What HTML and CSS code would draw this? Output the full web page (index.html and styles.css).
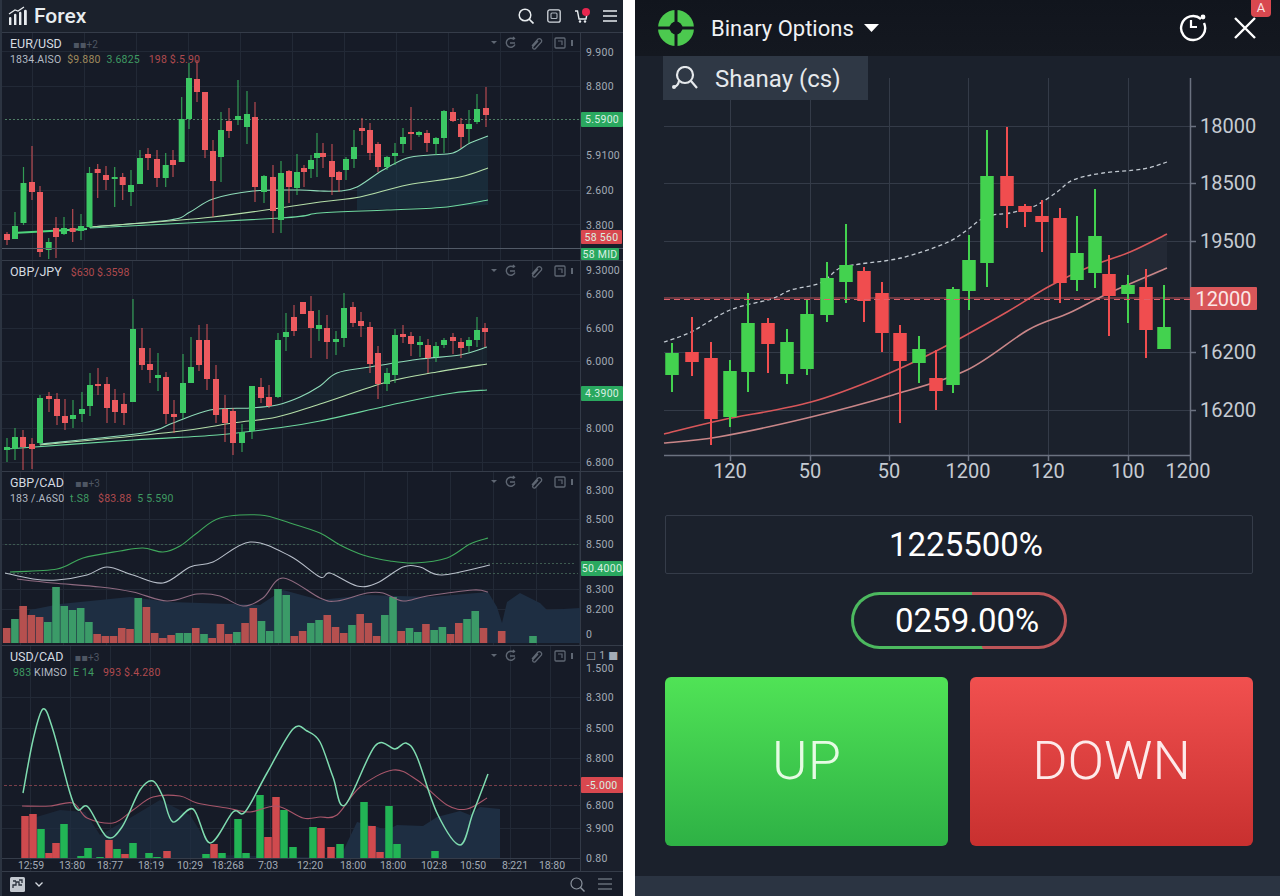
FILE: index.html
```html
<!DOCTYPE html>
<html lang="en">
<head>
    <meta charset="UTF-8">
    <meta name="viewport" content="width=device-width, initial-scale=1.0">
    <title>Forex / Binary Options</title>
    <link rel="stylesheet" href="styles.css">
</head>
<body>

<svg class="defs" width="0" height="0" aria-hidden="true">
    <symbol id="pane-tools" viewBox="0 0 84 14">
        <path d="M1 5h6l-3 3z" fill="currentColor"/>
        <path d="M24 3.5a4.5 4.5 0 1 0 1 5M20 7h5M23 1l2 2" fill="none" stroke="currentColor" stroke-width="1.4"/>
        <path d="M42 10l6-7a2.4 2.4 0 0 1 3.5 3l-6 6.5a1.6 1.6 0 0 1-2.5-2l5-5.5" fill="none" stroke="currentColor" stroke-width="1.3"/>
        <rect x="65" y="2" width="10" height="10" rx="1" fill="none" stroke="currentColor" stroke-width="1.3"/>
        <path d="M68 5h4v4" fill="none" stroke="currentColor" stroke-width="1.2"/>
        <path d="M82 4v6" stroke="currentColor" stroke-width="2"/>
    </symbol>
</svg>

<div class="screens">

    <!-- Forex -->
    <section class="forex">
        <header class="forex-top">
            <div class="brand">
                <svg class="brand-icon" viewBox="0 0 20 20" width="20" height="20">
                    <path d="M1 19v-7q0-1 1.2-1t1.2 1v7zM6 19v-10q0-1.2 1.2-1.2t1.2 1.2v10zM11 19v-12q0-1.2 1.2-1.2t1.2 1.2v12zM16 19v-14q0-1.2 1.4-1.2t1.4 1.2v14z" fill="#e8ecef"/>
                    <path d="M1 8l6-4 3 1 6-4" fill="none" stroke="#e8ecef" stroke-width="1.3"/>
                </svg>
                <span>Forex</span>
            </div>
            <div class="top-icons">
                <svg viewBox="0 0 16 16" width="16" height="16"><circle cx="7" cy="7" r="5.8" fill="none" stroke="#e8ecef" stroke-width="1.5"/><path d="M11 11l4.500 4.500" stroke="#e8ecef" stroke-width="1.7"/></svg>
                <svg viewBox="0 0 14 14" width="14" height="14"><rect x=".8" y=".8" width="12.400" height="12.400" rx="2" fill="none" stroke="#d5dae0" stroke-width="1.300"/><rect x="4" y="4" width="6" height="5.500" rx="1" fill="none" stroke="#aab2bc" stroke-width="1.100"/></svg>
                <svg viewBox="0 0 16 16" width="16" height="16"><path d="M1 3h2.500l1.500 8h7l1-5" fill="none" stroke="#e8ecef" stroke-width="1.400"/><circle cx="6" cy="13.500" r="1.200" fill="#e8ecef"/><circle cx="11" cy="13.500" r="1.200" fill="#e8ecef"/><circle cx="12" cy="4" r="4" fill="#e8264f"/></svg>
                <svg viewBox="0 0 14 14" width="14" height="14"><path d="M0 2h14M0 7h14M0 12h14" stroke="#e8ecef" stroke-width="1.500"/></svg>
            </div>
        </header>

        <div class="pane pane-a" data-chart="eur">
            <div class="pane-head">
                <div class="pane-title">EUR/USD <span class="chip">▪▪+2</span></div>
                <div class="pane-quote">1834.AISO <span class="amber">$9.880</span> <span class="gain">3.6825</span> <span class="loss">198 $.5.90</span></div>
            </div>
            <svg class="pane-tools"><use href="#pane-tools"/></svg>
        </div>
        <div class="pane pane-b" data-chart="gbpjpy">
            <div class="pane-head">
                <div class="pane-title">OBP/JPY <span class="loss loss-inline">$630 $.3598</span></div>
            </div>
            <svg class="pane-tools"><use href="#pane-tools"/></svg>
        </div>
        <div class="pane pane-c" data-chart="gbpcad">
            <div class="pane-head">
                <div class="pane-title">GBP/CAD <span class="chip">▪▪+3</span></div>
                <div class="pane-quote">183 /.A6S0 <span class="gain">t.S8</span> <span class="loss">$83.88</span> <span class="gain">5 5.590</span></div>
            </div>
            <svg class="pane-tools"><use href="#pane-tools"/></svg>
        </div>
        <div class="pane pane-d" data-chart="usdcad">
            <div class="pane-head">
                <div class="pane-title">USD/CAD <span class="chip">▪▪+3</span></div>
                <div class="pane-quote"><span class="gain">983</span> KIMSO <span class="gain">E 14</span> <span class="loss">993 $.4.280</span></div>
            </div>
            <svg class="pane-tools"><use href="#pane-tools"/></svg>
        </div>

        <footer class="forex-foot">
            <div class="foot-group">
                <svg viewBox="0 0 15 15" width="15" height="15"><rect width="15" height="15" rx="1.500" fill="#c3c8cf"/><path d="M3 11V8h3V5h3v3h3M9 3h3v3M3 4h3" fill="none" stroke="#2a303c" stroke-width="1.300"/></svg>
                <svg viewBox="0 0 8 5" width="8" height="5"><path d="M.5.5L4 4 7.500.5" fill="none" stroke="#d5dae0" stroke-width="1.300"/></svg>
            </div>
            <div class="foot-group foot-right">
                <svg viewBox="0 0 15 15" width="15" height="15"><circle cx="6.500" cy="6.500" r="5.500" fill="none" stroke="#8b939e" stroke-width="1.200"/><path d="M10.500 10.500l4 4" stroke="#8b939e" stroke-width="1.400"/></svg>
                <svg viewBox="0 0 14 12" width="14" height="12"><path d="M0 1h14M0 6h14M0 11h14" stroke="#8b939e" stroke-width="1.200"/></svg>
            </div>
        </footer>
    </section>

    <!-- Binary Options -->
    <section class="binary">
        <header class="binary-top">
            <svg class="logo" viewBox="0 0 36 36" width="36" height="36">
                <circle cx="18" cy="18" r="18" fill="#4cc94f"/>
                <path d="M18 0v36M0 18h36" stroke="#12161e" stroke-width="3"/>
                <circle cx="18" cy="18" r="6.500" fill="#12161e"/>
            </svg>
            <span class="binary-title">Binary Options</span>
            <svg class="caret" viewBox="0 0 15 8" width="15" height="8"><path d="M0 0h15l-7.500 8z" fill="#fff"/></svg>
            <div class="binary-actions">
                <svg viewBox="0 2 30 30" width="30" height="30">
                    <path d="M23 8a12 12 0 1 0 3 4" fill="none" stroke="#fff" stroke-width="2.400"/>
                    <circle cx="25" cy="6" r="2.400" fill="#fff"/>
                    <path d="M13 9v7h6" fill="none" stroke="#fff" stroke-width="2.200"/>
                </svg>
                <div class="close">
                    <svg viewBox="0 0 22 22" width="22" height="22"><path d="M1 1l20 20M21 1L1 21" stroke="#fff" stroke-width="2.400"/></svg>
                    <span class="close-badge">A</span>
                </div>
            </div>
        </header>

        <div class="binary-chart">
            <div class="pair-search">
                <svg viewBox="0 0 26 24" width="26" height="24">
                    <circle cx="13" cy="9" r="8" fill="none" stroke="#e6e9ec" stroke-width="2.200"/>
                    <path d="M19 15l6 7M7 15q-1 5-5 6" fill="none" stroke="#e6e9ec" stroke-width="2.200"/>
                    <circle cx="2" cy="21" r="2" fill="#e6e9ec"/>
                </svg>
                <span>Shanay (cs)</span>
            </div>
            <div data-chart="binary"></div>
        </div>

        <div class="amount">1225500%</div>
        <div class="ratio"><div class="ratio-inner">0259.00%</div></div>

        <div class="trade">
            <button class="trade-btn trade-up">UP</button>
            <button class="trade-btn trade-down">DOWN</button>
        </div>

        <div class="binary-foot"></div>
    </section>
</div>

<script src="chart.js"></script>
</body>
</html>
```

FILE: styles.css
```css
* {
    box-sizing: border-box;
}
body {
    margin: 0;
    background: #fff;
    font-family: Roboto, "DejaVu Sans", sans-serif;
}
.defs {
    position: absolute;
}
.screens {
    display: grid;
    grid-template-columns: 623px 645px;
    column-gap: 12px;
    height: 896px;
    overflow: hidden;
}

/* Forex */
.forex {
    display: flex;
    flex-direction: column;
    background: #161b27;
    border-left: 2px solid #2c3441;
}
.forex-top {
    display: flex;
    align-items: center;
    justify-content: space-between;
    flex: 0 0 32px;
    padding: 0 6px 0 6px;
    background: #1b212c;
}
.brand {
    display: flex;
    align-items: center;
    gap: 6px;
    color: #e8ecef;
    font-size: 21px;
    font-weight: 500;
}
.top-icons {
    display: flex;
    align-items: center;
    gap: 13px;
}
.pane {
    position: relative;
}
.pane svg {
    display: block;
}
.pane-a { height: 228px; }
.pane-b { height: 211px; }
.pane-c { height: 174px; }
.pane-d { height: 227px; }
.pane-head {
    position: absolute;
    top: 4px;
    left: 8px;
    color: #d5dae0;
}
.pane-title {
    font-size: 12.5px;
    line-height: 16px;
}
.pane-quote {
    margin-top: -1px;
    font-size: 10.5px;
    line-height: 16px;
    color: #b3bac3;
    letter-spacing: .2px;
}
.chip {
    margin-left: 8px;
    font-size: 10px;
    color: #4e5663;
}
.amber { color: #a08a5c; margin-left: 3px; }
.gain { color: #3f9a62; margin-left: 3px; }
.loss { color: #b04a4e; margin-left: 6px; }
.loss-inline { margin-left: 6px; font-size: 10.5px; }
svg.pane-tools {
    position: absolute;
    top: 4px;
    left: 488px;
    width: 84px;
    height: 14px;
    color: #5f6773;
}
.forex-foot {
    display: flex;
    align-items: center;
    justify-content: space-between;
    flex: 1;
    padding: 0 11px 0 8px;
    background: #171c28;
}
.foot-group {
    display: flex;
    align-items: center;
    gap: 10px;
}
.foot-right {
    gap: 13px;
}

/* chart parts */
.plot-bg { fill: #161b27; }
.axis-bg { fill: #1a1f2b; }
.grid { stroke: #222936; stroke-width: 1; }
.axis-line { stroke: #333a47; stroke-width: 1; }
.rule { stroke: #353c49; stroke-width: 1; }
.rule-bright { stroke: #525a67; stroke-width: 1; }
.tick { fill: #a3abb6; font-size: 10.5px; letter-spacing: .3px; dominant-baseline: central; }
.date { fill: #a3abb6; font-size: 10.5px; text-anchor: middle; dominant-baseline: central; }
.tag-green { fill: #2aa85f; }
.tag-red { fill: #d9484f; }
.tag-text { fill: #d9efe2; font-size: 10.5px; text-anchor: middle; dominant-baseline: central; letter-spacing: .3px; }
.up { fill: #3cc864; }
.down { fill: #ec5a5f; }
.wick { opacity: .75; }
.wick.up { stroke: #3cc864; }
.wick.down { stroke: #ec5a5f; }
.bar-up { fill: #3b9b68; }
.bar-down { fill: #b5504f; }
.bright .bar-up { fill: #22b455; }
.bright .bar-down { fill: #cf4a4e; }
.dash-green { stroke: #4f7d65; stroke-width: 1; stroke-dasharray: 2 2; }
.dash-red { stroke: #7a3f4a; stroke-width: 1; stroke-dasharray: 3 2; }
.dash-faint { stroke: #3d5a50; stroke-width: 1; stroke-dasharray: 2 2; }
.line { fill: none; stroke-width: 1.1; }
.l-teal { stroke: #8fdcb9; }
.l-pale { stroke: #b5dfa9; }
.l-green { stroke: #6fd8a0; }
.l-thick { stroke: #4fd47c; stroke-width: 2; }
.l-forest { stroke: #3fa85c; }
.l-white { stroke: #b8bfca; }
.l-mauve { stroke: #8f6a80; }
.l-mint { stroke: #7fdcb0; stroke-width: 1.5; }
.l-rose { stroke: #a8566a; }
.area-teal { fill: #1c3c4b; }
.area-soft { fill: #1a2b36; }
.area-navy { fill: #1e2e42; }

/* Binary Options */
.binary {
    display: flex;
    flex-direction: column;
    background: #1b212c;
}
.binary-top {
    display: flex;
    align-items: center;
    flex: 0 0 56px;
    padding: 0 24px 0 23px;
    background: linear-gradient(#11151d, #141820);
}
.binary-title {
    margin-left: 17px;
    color: #f0f2f4;
    font-size: 22px;
}
.caret {
    margin-left: 10px;
}
.binary-actions {
    display: flex;
    align-items: center;
    gap: 26px;
    margin-left: auto;
}
.close {
    position: relative;
    height: 22px;
}
.close svg {
    display: block;
}
.close-badge {
    position: absolute;
    top: -18px;
    left: 17px;
    width: 20px;
    height: 18px;
    border-radius: 0 0 4px 4px;
    background: #d9484f;
    color: #fbe3e3;
    font-size: 13px;
    line-height: 17px;
    text-align: center;
}
.binary-chart {
    position: relative;
    flex: 0 0 459px;
}
.binary-chart svg {
    display: block;
}
.pair-search {
    position: absolute;
    top: 0;
    left: 28px;
    display: flex;
    align-items: center;
    gap: 17px;
    width: 205px;
    height: 44px;
    padding: 2px 0 0 9px;
    background: #2f3845;
    color: #e6e9ec;
    font-size: 24px;
}
.pair-search svg {
    margin-top: -2px;
}
.amount {
    flex: 0 0 59px;
    margin: 0 27px 0 30px;
    padding-left: 14px;
    border: 1px solid #353c49;
    border-radius: 2px;
    color: #fff;
    font-size: 33px;
    line-height: 57px;
    text-align: center;
}
.ratio {
    align-self: flex-start;
    width: 216px;
    height: 57px;
    margin: 18px 0 0 216px;
    padding: 3px;
    border-radius: 29px;
    background: linear-gradient(79deg, #4cb95f 58%, #bd5558 58%);
}
.ratio-inner {
    height: 100%;
    padding-left: 41px;
    border-radius: 26px;
    background: #1b212c;
    color: #fff;
    font-size: 33px;
    line-height: 51px;
}
.trade {
    display: grid;
    grid-template-columns: 283px 283px;
    column-gap: 22px;
    height: 169px;
    margin: 28px 0 0 30px;
}
.trade-btn {
    padding-bottom: 4px;
    border: none;
    border-radius: 6px;
    font-family: Roboto, "DejaVu Sans", sans-serif;
    font-size: 54px;
    font-weight: 300;
    cursor: pointer;
}
.trade-up {
    background: linear-gradient(#50e356, #2eb145);
    color: #e6fbe4;
}
.trade-down {
    background: linear-gradient(#f1504f, #c8302f);
    color: #fdeaea;
}
.binary-foot {
    flex: 1;
    margin-top: 30px;
    background: #2b3442;
}
.binary-chart .grid { stroke: #343b48; }
.binary-chart .axis-line { stroke: #6b7280; stroke-width: 1.5; }
.binary-chart .tick,
.binary-chart .date { fill: #c6cbd2; font-size: 20px; letter-spacing: 0; }
.binary-chart .up { fill: #43d24f; }
.binary-chart .down { fill: #f04d4f; }
.binary-chart .wick { opacity: 1; }
.binary-chart .wick.up { stroke: #43d24f; }
.binary-chart .wick.down { stroke: #f04d4f; }
.binary-chart .tag-red { fill: #d9575a; }
.binary-chart .tag-text { fill: #fbe7e7; font-size: 20px; letter-spacing: 0; }
.l-dash { stroke: #c3cad2; stroke-width: 1.3; stroke-dasharray: 4 3; }
.l-red { stroke: #d9575a; stroke-width: 1.6; }
.l-pink { stroke: #c98688; stroke-width: 1.6; }
.price-line { stroke: #8a4048; stroke-width: 1.5; }
.price-dash { stroke: #e0606a; stroke-width: 1; stroke-dasharray: 6 4; }
.shade { fill: #252c38; }
```

FILE: chart.js
```js
// candle rows: x, wick top, body top, body bottom, wick bottom, g / r
const eurCandles = [
    [7,232,234,240,245,'r'],[15,212,226,239,239,'g'],[23.5,167,183,223,225,'g'],[32,146,182,192,200,'r'],
    [40,186,192,252,257,'r'],[48.7,238,242,250,259,'g'],[56,217,228,237,258,'r'],[64,217,228,234,235,'g'],
    [72.7,209,228,232,242,'r'],[81,214,226,231,240,'g'],[89.5,167,173,227,228,'g'],[97.7,164,169,173,198,'r'],
    [106,166,175,180,190,'r'],[114.7,167,177,179,207,'g'],[122.7,173,177,185,200,'r'],[131,170,185,192,206,'g'],
    [140,150,158,184,184,'g'],[148,148,154,158,170,'r'],[157,150,159,178,187,'r'],[165.7,153,165,178,187,'g'],
    [173,150,160,165,177,'r'],[181.7,97,119,162,162,'g'],[189,63,78,119,129,'g'],[197,60,79,92,102,'r'],
    [205,92,92,150,158,'r'],[213,140,151,181,217,'r'],[221,112,130,157,182,'g'],[229,108,121,131,138,'r'],
    [238,80,116,120,125,'g'],[247,91,114,127,144,'g'],[255,102,117,187,202,'r'],[264,175,176,192,203,'g'],
    [273,165,177,211,233,'r'],[281,161,173,220,233,'g'],[289,170,171,187,203,'r'],[297,154,172,188,195,'g'],
    [304,165,168,172,187,'r'],[311,155,160,169,178,'g'],[317,133,153,158,177,'g'],[323,143,153,157,168,'r'],
    [332,144,161,177,195,'r'],[339,171,172,180,192,'r'],[346,157,159,170,180,'g'],[354,130,147,159,168,'g'],
    [362,118,128,131,145,'r'],[370,123,130,153,160,'r'],[378,142,144,167,172,'r'],[387,156,157,167,170,'g'],
    [395,143,153,156,165,'g'],[403,128,137,144,153,'g'],[411,107,132,134,150,'r'],[419,131,132,135,137,'g'],
    [427,130,133,143,152,'r'],[436,137,138,144,155,'g'],[444,110,111,138,153,'g'],[453,108,112,121,122,'r'],
    [461,118,124,137,148,'r'],[469,110,124,129,143,'g'],[477,94,109,122,124,'g'],[486,87,108,115,127,'r']
];
const jpyCandles = [
    [7,438,447,450,462,'g'],[15,428,437,449,460,'g'],[23,430,437,447,470,'r'],[32,438,444,449,469,'r'],
    [40,395,398,443,445,'g'],[49,392,396,399,412,'r'],[57,393,399,416,425,'r'],[65,399,416,423,430,'r'],
    [73,400,415,419,428,'g'],[82,392,409,414,422,'g'],[90,373,385,406,416,'g'],[98,368,384,386,395,'r'],
    [107,377,384,408,423,'r'],[115,389,400,412,423,'r'],[124,393,404,413,425,'r'],[133,299,329,402,402,'g'],
    [142,328,348,365,370,'r'],[150,348,364,370,383,'r'],[158,353,375,378,391,'g'],[166,372,377,414,424,'r'],
    [174,400,414,417,433,'r'],[183,354,383,413,419,'g'],[191,337,367,383,383,'g'],[199,325,340,365,371,'r'],
    [207,324,340,379,390,'r'],[216,365,379,415,423,'r'],[225,395,409,423,442,'r'],[233,408,411,443,455,'r'],
    [242,424,432,443,452,'g'],[252,386,386,431,439,'g'],[261,378,387,398,403,'r'],[269,385,397,406,408,'r'],
    [278,333,340,397,398,'g'],[286,313,332,337,351,'g'],[294,305,317,331,336,'r'],[303,302,302,314,314,'r'],
    [311,296,311,328,358,'r'],[319,310,325,329,341,'g'],[327,315,328,342,359,'r'],[336,331,339,342,355,'g'],
    [344,293,308,338,347,'g'],[353,302,307,323,327,'r'],[361,312,321,326,337,'r'],[370,322,327,364,373,'r'],
    [378,346,353,384,399,'r'],[387,368,373,384,391,'g'],[395,329,335,375,383,'g'],[403,325,334,337,343,'r'],
    [411,332,336,344,356,'r'],[420,336,342,345,357,'g'],[428,339,345,358,373,'r'],[436,342,346,357,362,'g'],
    [444,338,340,345,348,'g'],[453,333,337,341,354,'r'],[461,338,342,348,358,'r'],[469,337,340,346,352,'g'],
    [477,317,330,340,347,'g'],[485,323,328,332,347,'r']
];
const binCandles = [
    [672,343,353,375,392,'g'],[692,317,352,362,376,'r'],[711,342,358,419,445,'r'],[730,360,371,417,427,'g'],
    [748,293,323,372,392,'g'],[768,318,323,344,373,'r'],[787,329,342,374,384,'g'],[807,300,314,369,375,'g'],
    [827,262,278,315,322,'g'],[846,224,265,282,303,'g'],[864,267,271,301,322,'r'],[882,282,293,333,352,'r'],
    [900,325,333,361,423,'r'],[919,336,349,363,383,'g'],[936,350,378,391,410,'r'],[953,287,289,385,393,'g'],
    [969,235,260,291,310,'g'],[987,130,176,263,287,'g'],[1007,127,176,206,228,'r'],[1025,204,206,212,227,'r'],
    [1042,200,216,222,252,'r'],[1060,208,218,283,303,'r'],[1077,216,253,280,291,'g'],[1095,189,236,273,288,'g'],
    [1109,255,274,296,336,'r'],[1128,275,285,294,323,'g'],[1146,269,287,330,358,'r'],[1164,285,327,349,349,'g']
];

// bar rows: x, top, g / r
const gbpBars = [628,619,606,615,617,622,587,606,610,608,622,634,636,636,628,629,598,607,633,638,635,633,633,628,634,638,624,634,632,623,608,621,631,589,595,636,631,623,620,615,627,633,625,614,623,636,615,597,631,628,632,624,630,627,634,623,619,611,628];
const gbpSides = 'rgrrrggggggrrrrrgrrrrggrgrrrgrrggggrrgg' + 'rrrgrrrggrggrggrrggr';
const cadBars = [
    [25,816,'r'],[33,814,'r'],[41,829,'g'],[49,853,'r'],[56,843,'r'],[64,824,'g'],[81,856,'g'],[88,848,'g'],
    [100,857,'g'],[109,840,'r'],[117,849,'g'],[125,854,'r'],[133,843,'g'],[149,853,'g'],[157,857,'g'],[167,851,'r'],
    [206,854,'g'],[214,844,'r'],[222,853,'g'],[238,819,'g'],[246,853,'g'],[260,795,'g'],[268,837,'r'],[276,797,'r'],
    [284,810,'g'],[293,847,'g'],[313,827,'g'],[321,828,'r'],[331,847,'r'],[340,844,'g'],[364,802,'g'],[372,826,'r'],
    [380,852,'r'],[389,806,'g'],[397,844,'g'],[435,851,'g']
];

function steps(start, step, end) {
    const out = [];
    for (let x = start; x < end; x += step) out.push(x);
    return out;
}

// smooth line through the points
function spline(pts) {
    let d = `M${pts[0][0]} ${pts[0][1]}`;
    for (let i = 0; i < pts.length - 1; i++) {
        const p0 = pts[i - 1] || pts[i], p1 = pts[i], p2 = pts[i + 1], p3 = pts[i + 2] || p2;
        const c1x = p1[0] + (p2[0] - p0[0]) / 6, c1y = p1[1] + (p2[1] - p0[1]) / 6;
        const c2x = p2[0] - (p3[0] - p1[0]) / 6, c2y = p2[1] - (p3[1] - p1[1]) / 6;
        d += `C${c1x.toFixed(1)} ${c1y.toFixed(1)} ${c2x.toFixed(1)} ${c2y.toFixed(1)} ${p2[0]} ${p2[1]}`;
    }
    return d;
}

function line(cls, pts) {
    return `<path class="line ${cls}" d="${spline(pts)}"/>`;
}

function area(cls, pts, opacity) {
    const points = pts.map(p => p.join(',')).join(' ');
    return `<polygon class="${cls}" points="${points}" opacity="${opacity || 1}"/>`;
}

function candles(rows, w, wickW) {
    return rows.map(c => {
        const side = c[5] === 'g' ? 'up' : 'down';
        return `<line class="wick ${side}" x1="${c[0]}" x2="${c[0]}" y1="${c[1]}" y2="${c[4]}" stroke-width="${wickW}"/>` +
            `<rect class="${side}" x="${c[0] - w / 2}" y="${c[2]}" width="${w}" height="${c[3] - c[2]}"/>`;
    }).join('');
}

function bars(rows, base, w) {
    return rows.map(b => {
        const side = b[2] === 'g' ? 'bar-up' : 'bar-down';
        return `<rect class="${side}" x="${b[0] - w / 2}" y="${b[1]}" width="${w}" height="${base - b[1]}"/>`;
    }).join('');
}

function hline(cls, y, x1, x2) {
    return `<line class="${cls}" x1="${x1}" x2="${x2}" y1="${y}" y2="${y}"/>`;
}

function vline(cls, x, y1, y2) {
    return `<line class="${cls}" x1="${x}" x2="${x}" y1="${y1}" y2="${y2}"/>`;
}

function tick(label, y, x) {
    return `<text class="tick" x="${x}" y="${y}">${label}</text>`;
}

function tag(cls, label, x, y, w, h, textX) {
    return `<rect class="${cls}" x="${x}" y="${y}" width="${w}" height="${h}" rx="1"/>` +
        `<text class="tag-text" x="${textX || x + w / 2}" y="${y + h / 2}">${label}</text>`;
}

// shared frame of a left pane: background, grid, axis column, ticks
function frame(top, bottom, gridXs, gridYs, ticks) {
    let out = `<rect class="plot-bg" x="2" y="${top}" width="621" height="${bottom - top}"/>`;
    out += `<rect class="axis-bg" x="581" y="${top}" width="42" height="${bottom - top}"/>`;
    gridXs.forEach(x => { out += vline('grid', x + .5, top, bottom); });
    gridYs.forEach(y => { out += hline('grid', y + .5, 2, 580); });
    out += vline('axis-line', 580.5, top, bottom);
    out += hline('rule', top + .5, 2, 623);
    ticks.forEach(t => { out += tick(t[0], t[1], 586); });
    return out;
}

const charts = {
    eur: { top: 32, height: 228, draw() {
        const lineA = [[90,227],[170,220],[190,212],[213,199],[253,191],[300,190],[320,191],[340,191],[357,187],[383,170],[407,158],[430,155],[453,153],[470,143],[488,136]];
        return frame(32, 260, steps(32, 52, 580), [51,86,155,190,224], [['9.900',52],['8.800',86],['5.9100',155],['2.600',190],['3.800',225]]) +
            area('area-teal', [[357,187],[383,170],[407,158],[430,155],[453,153],[470,143],[488,136],[488,205],[357,210]], .5) +
            hline('dash-green', 119.5, 5, 580) +
            line('l-teal', lineA) +
            line('l-pale', [[90,227],[213,217],[320,202],[360,197],[407,185],[460,177],[488,168]]) +
            line('l-green', [[90,228],[281,218],[320,213],[387,210],[447,207],[488,200]]) +
            line('l-thick', [[13,233],[50,231],[87,229]]) +
            candles(eurCandles, 6, 1.2) +
            hline('rule-bright', 248.5, 2, 623) +
            tag('tag-green', '5.5900', 581, 112, 42, 15) +
            tag('tag-red', '58 560', 581, 230, 41, 14) +
            tag('tag-green', '58 MID', 581, 248, 38, 12);
    } },
    gbpjpy: { top: 260, height: 211, draw() {
        const lineA = [[40,444],[143,433],[173,423],[210,410],[250,408],[277,405],[300,397],[320,386],[337,373],[370,367],[420,359],[460,355],[487,347]];
        const lineB = [[40,445],[173,432],[233,423],[277,417],[320,404],[387,382],[437,372],[487,364]];
        return frame(260, 471, steps(32, 50, 580), [294,328,361,394,428,462], [['9.3000',270],['6.800',294],['6.600',328],['6.000',361],['8.000',428],['6.800',462]]) +
            area('area-soft', lineA.slice(3).concat(lineB.slice(2).reverse()), .5) +
            line('l-teal', lineA) + line('l-pale', lineB) +
            line('l-green', [[7,449],[133,440],[217,435],[277,428],[320,421],[400,403],[453,393],[487,390]]) +
            candles(jpyCandles, 6, 1.2) +
            tag('tag-green', '4.3900', 581, 386, 42, 15);
    } },
    gbpcad: { top: 471, height: 174, draw() {
        const barRows = gbpBars.map((top, i) => [6.7 + i * 8.22, top, gbpSides[i]]);
        barRows.push([501.7, 631, 'r'], [533, 636, 'g']);
        return frame(471, 645, steps(20, 43, 580), [519,544,589,609], [['8.300',490],['8.500',519],['8.500',544],['8.300',589],['8.200',609],['0',634]]) +
            area('area-navy', [[20,643],[30,610],[60,604],[130,597],[170,602],[260,605],[283,590],[320,600],[367,595],[430,597],[488,592],[497,607],[502,623],[507,602],[520,593],[540,603],[547,610],[580,608],[580,643]]) +
            hline('dash-faint', 544.5, 5, 578) + hline('dash-faint', 573.5, 5, 578) + hline('dash-faint', 563.5, 460, 575) +
            bars(barRows, 643, 7.6) +
            line('l-forest', [[10,572],[57,569],[83,558],[120,551],[143,548],[163,552],[180,546],[197,533],[220,518],[260,515],[290,523],[320,533],[340,545],[363,555],[390,561],[415,563],[447,558],[470,544],[488,538]]) +
            line('l-white', [[5,573],[33,579],[57,580],[87,575],[107,567],[133,575],[163,583],[190,567],[213,562],[250,542],[290,556],[320,577],[330,573],[357,586],[377,583],[403,567],[420,567],[442,575],[490,565]]) +
            line('l-mauve', [[17,579],[53,583],[100,587],[133,592],[167,601],[197,594],[220,596],[243,606],[263,598],[283,578],[320,598],[337,601],[367,593],[383,593],[403,601],[427,596],[473,590],[488,592]]) +
            tag('tag-green', '50.4000', 581, 561, 42, 15);
    } },
    usdcad: { top: 645, height: 227, bright: true, draw() {
        return frame(645, 872, steps(30, 40, 580), [697,728,758,805,828], [['□ 1 ■',655],['1.500',668],['8.300',697],['8.500',728],['8.800',758],['6.800',805],['3.900',828],['0.80',858]]) +
            area('area-navy', [[30,858],[33,818],[60,810],[85,812],[100,835],[135,815],[160,800],[190,815],[215,855],[347,858]], .7) +
            area('area-navy', [[347,843],[357,822],[377,827],[387,830],[397,825],[423,826],[437,817],[460,811],[470,815],[480,807],[500,809],[500,858],[340,858]]) +
            hline('dash-red', 785.5, 4, 580) +
            bars(cadBars, 858, 7.5) +
            line('l-rose', [[22,806],[50,806],[73,803],[87,818],[113,823],[133,810],[153,797],[180,796],[197,803],[227,808],[250,812],[277,806],[303,818],[320,817],[337,815],[360,787],[393,770],[417,780],[447,805],[467,809],[487,798]]) +
            line('l-mint', [[23,793],[33,740],[43,709],[53,730],[70,793],[78,810],[88,807],[107,837],[122,827],[140,790],[153,781],[163,797],[173,822],[193,809],[210,843],[233,812],[245,812],[267,773],[293,729],[307,731],[320,742],[333,777],[345,805],[375,746],[395,749],[406,743],[417,757],[437,813],[460,845],[473,813],[488,774]]) +
            hline('rule', 858.5, 2, 580) + hline('rule', 871.5, 2, 623) +
            [['12:59',31],['13:80',72],['18:77',110],['18:19',151],['10:29',190],['18:268',228],['7:03',268],['12:20',310],['18:00',353],['18:00',393],['102:8',434],['10:50',473],['8:221',515],['18:80',552]]
                .map(d => `<text class="date" x="${d[1]}" y="865">${d[0]}</text>`).join('') +
            tag('tag-red', '-5.000', 581, 777, 42, 16);
    } },
    binary: { left: 635, top: 56, width: 645, height: 459, draw() {
        let out = '';
        [730,810,889,968,1048,1128].forEach(x => {
            out += vline('grid', x + .5, 78, 455);
            out += vline('axis-line', x + .5, 455, 461);
        });
        [126,183,241,352,410].forEach(y => {
            out += hline('grid', y + .5, 664, 1190);
            out += hline('axis-line', y + .5, 1190, 1196);
        });
        out += area('shade', [[1130,252],[1167,234],[1167,268],[1130,290]], .8);
        out += hline('price-line', 298, 664, 1190);
        out += vline('axis-line', 1190.5, 78, 455) + hline('axis-line', 455.5, 664, 1191);
        out += vline('axis-line', 1190.5, 455, 461);
        out += line('l-red', [[664,434],[722,420],[811,402],[885,375],[942,348],[1007,312],[1048,287],[1089,267],[1130,252],[1167,234]]);
        out += line('l-pink', [[664,443],[718,437],[807,418],[893,395],[967,370],[1028,330],[1069,313],[1109,293],[1167,268]]);
        out += line('l-dash', [[664,342],[691,332],[730,310],[771,299],[791,290],[820,283],[840,268],[860,264],[901,258],[946,243],[967,230],[980,220],[993,215],[1010,213],[1035,206],[1057,192],[1073,180],[1103,173],[1143,169],[1167,162]]);
        out += candles(binCandles, 13.5, 2);
        out += hline('price-dash', 299.5, 664, 1190);
        [['18000',126],['18500',183],['19500',241],['16200',352],['16200',410]].forEach(t => { out += tick(t[0], t[1], 1200); });
        [['120',730],['50',810],['50',889],['1200',968],['120',1048],['100',1128],['1200',1188]].forEach(d => {
            out += `<text class="date" x="${d[1]}" y="471">${d[0]}</text>`;
        });
        out += tag('tag-red', '12000', 1190, 287, 67, 23);
        return out;
    } }
};

document.querySelectorAll('[data-chart]').forEach(el => {
    const c = charts[el.dataset.chart];
    const left = c.left === undefined ? 2 : c.left;
    const width = c.width || 621;
    const svg = `<svg class="${c.bright ? 'bright' : ''}" width="${width}" height="${c.height}" viewBox="${left} ${c.top} ${width} ${c.height}">${c.draw()}</svg>`;
    el.insertAdjacentHTML('afterbegin', svg);
});
```
